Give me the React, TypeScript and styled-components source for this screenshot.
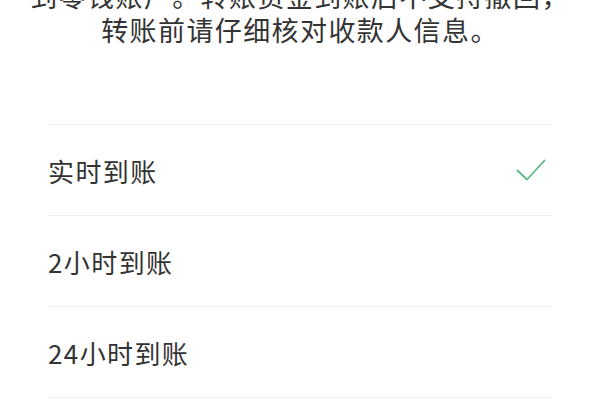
import * as React from 'react';
import styled, { createGlobalStyle } from 'styled-components';

const GlobalStyle = createGlobalStyle`
  html, body {
    margin: 0;
    padding: 0;
    background: #ffffff;
  }
  body {
    font-family: "Noto Sans CJK SC", "Noto Sans", sans-serif;
    color: #333333;
    overflow: hidden;
  }
`;

const Page = styled.div`
  width: 600px;
  height: 400px;
  overflow: hidden;
  background: #ffffff;
`;

const Content = styled.div`
  padding: 0 48px;
  margin-top: -21px;
`;

const Notice = styled.p`
  margin: 0 -48px 77px;
  text-align: center;
  white-space: nowrap;
  font-size: 27px;
  line-height: 34px;
  letter-spacing: 1.4px;
  color: #333333;
`;

const List = styled.ul`
  list-style: none;
  margin: 0;
  padding: 0;
  border-top: 1px solid #f0f0f0;
`;

const Row = styled.li`
  height: 90px;
  display: flex;
  align-items: center;
  justify-content: space-between;
  padding: 0 6px 0 0;
  border-bottom: 1px solid #f0f0f0;
  font-size: 26px;
  letter-spacing: 1.4px;
  color: #333333;
`;

const Label = styled.span`
  display: block;
`;

const Check = () => (
  <svg width="30" height="22" viewBox="0 0 30 22" fill="none">
    <polyline
      points="1.5,11.5 11,20.5 28.5,1.5"
      stroke="#5cb985"
      strokeWidth="1.8"
      strokeLinecap="round"
      strokeLinejoin="round"
    />
  </svg>
);

const options = [
  { id: 'now', label: '实时到账', selected: true },
  { id: '2h', label: '2小时到账', selected: false },
  { id: '24h', label: '24小时到账', selected: false },
];

export default function App() {
  return (
    <>
      <GlobalStyle />
      <Page>
        <Content>
          <Notice>
            到零钱账户。转账资金到账后不支持撤回，
            <br />
            转账前请仔细核对收款人信息。
          </Notice>
          <List>
            {options.map((o) => (
              <Row key={o.id}>
                <Label>{o.label}</Label>
                {o.selected && <Check />}
              </Row>
            ))}
          </List>
        </Content>
      </Page>
    </>
  );
}
